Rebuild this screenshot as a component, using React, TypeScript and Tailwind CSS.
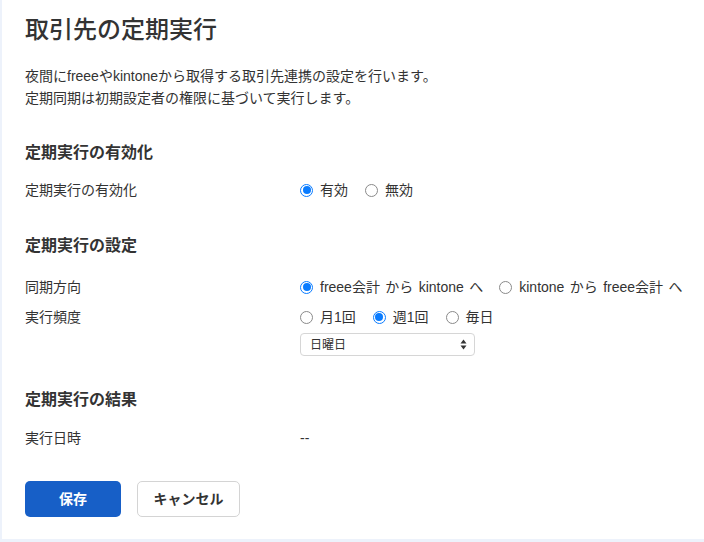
const font = { fontFamily: '"Liberation Sans", "Noto Sans CJK JP", sans-serif' };

function Radio({ label, checked, wide }: { label: string; checked?: boolean; wide?: boolean }) {
  return (
    <label className="flex items-center gap-[7px] leading-[22px]">
      {checked ? (
        <span className="flex h-[13px] w-[13px] items-center justify-center rounded-full border border-[#0a7cff] bg-white">
          <span className="h-[8px] w-[8px] rounded-full bg-[#0a7cff]" />
        </span>
      ) : (
        <span className="h-[13px] w-[13px] rounded-full border border-[#8a8a8a] bg-white" />
      )}
      <span className={wide ? "whitespace-nowrap [word-spacing:1.5px]" : ""}>{label}</span>
    </label>
  );
}

function Row({ label, children, className }: { label: string; children: React.ReactNode; className?: string }) {
  return (
    <div className={"grid grid-cols-[275px_1fr] text-[14px] leading-[22px] " + (className ?? "")}>
      <div>{label}</div>
      <div>{children}</div>
    </div>
  );
}

export default function App() {
  return (
    <div className="h-[542px] w-[704px] overflow-hidden bg-[#edf2fb] text-[#333]" style={font}>
      <div className="ml-[2px] h-[539px] bg-white pl-[23px] pt-[15px]">
        <h1 className="text-[24px] font-medium leading-[30px]">取引先の定期実行</h1>
        <p className="mt-[20px] text-[14px] leading-[22px]">
          夜間にfreeeやkintoneから取得する取引先連携の設定を行います。
          <br />
          定期同期は初期設定者の権限に基づいて実行します。
        </p>

        <h2 className="mt-[32px] text-[16px] font-bold leading-[24px]">定期実行の有効化</h2>
        <Row label="定期実行の有効化" className="mt-[14px]">
          <div className="flex gap-[17px]">
            <Radio label="有効" checked />
            <Radio label="無効" />
          </div>
        </Row>

        <h2 className="mt-[33px] text-[16px] font-bold leading-[24px]">定期実行の設定</h2>
        <Row label="同期方向" className="mt-[18px]">
          <div className="flex gap-[16px]">
            <Radio label="freee会計 から kintone へ" checked wide />
            <Radio label="kintone から freee会計 へ" wide />
          </div>
        </Row>
        <Row label="実行頻度" className="mt-[8px]">
          <div className="flex gap-[17px]">
            <Radio label="月1回" />
            <Radio label="週1回" checked />
            <Radio label="毎日" />
          </div>
          <div className="mt-[5px] flex h-[23px] w-[175px] items-center justify-between rounded-[4px] border border-[#d6d6d6] bg-white pl-[9px] pr-[7px] text-[12px]">
            <span>日曜日</span>
            <svg width="7" height="11" viewBox="0 0 7 11">
              <path d="M3.5 0.5 L6.5 4.5 L0.5 4.5 Z" fill="#333" />
              <path d="M3.5 10.5 L6.5 6.5 L0.5 6.5 Z" fill="#333" />
            </svg>
          </div>
        </Row>

        <h2 className="mt-[32px] text-[16px] font-bold leading-[24px]">定期実行の結果</h2>
        <Row label="実行日時" className="mt-[15px]">
          <span>--</span>
        </Row>

        <div className="mt-[32px] flex gap-[16px]">
          <button className="h-[36px] w-[96px] rounded-[5px] bg-[#175fc7] text-[14px] font-bold text-white">保存</button>
          <button className="h-[36px] w-[103px] rounded-[5px] border border-[#d4d4d4] bg-white text-[14px] font-bold text-[#333]">
            キャンセル
          </button>
        </div>
      </div>
    </div>
  );
}
